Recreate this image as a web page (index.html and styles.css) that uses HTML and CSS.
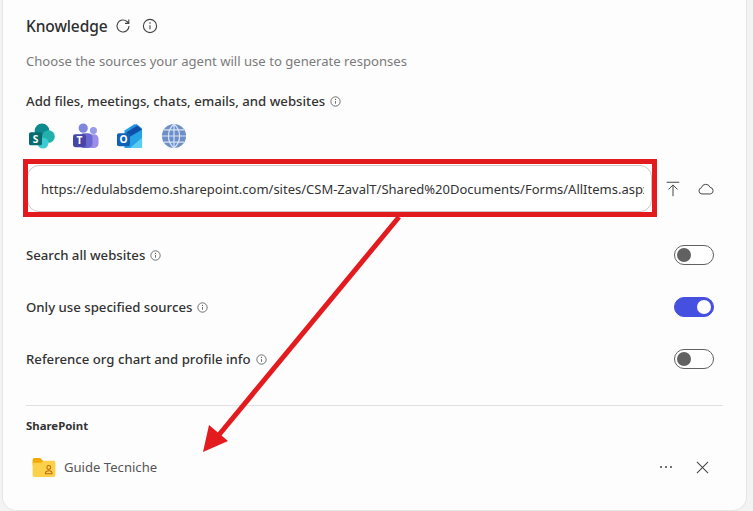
FILE: index.html
```html
<!DOCTYPE html>
<html lang="en">
<head>
    <meta charset="UTF-8" />
    <meta name="viewport" content="width=device-width, initial-scale=1.0" />
    <title>Knowledge</title>
    <link rel="stylesheet" href="styles.css">
</head>
<body>
    <div class="card">
        <div class="title-row">
            <h1>Knowledge</h1>
            <svg class="title-icon refresh" viewBox="0 0 16 16"><path d="M14 8a6 6 0 1 1-2-4.500L13.800 5.200M13.800 1.500v3.900H10"/></svg>
            <svg class="title-icon" viewBox="0 0 16 16"><circle cx="8" cy="8" r="6.600"/><path d="M8 7.300v4"/><circle class="dot" cx="8" cy="5" r=".8"/></svg>
        </div>
        <p class="desc">Choose the sources your agent will use to generate responses</p>
        <div class="label add-label">Add files, meetings, chats, emails, and websites
            <svg class="info" viewBox="0 0 16 16"><circle cx="8" cy="8" r="6.800"/><path d="M8 7.300v4"/><circle class="dot" cx="8" cy="4.900" r=".9"/></svg>
        </div>
        <div class="sources">
            <svg viewBox="0 0 28 28"><circle cx="14" cy="8.500" r="8" fill="#0e8a8f"/><circle cx="21" cy="14.500" r="6.800" fill="#22b0ab"/><circle cx="15" cy="21.500" r="6" fill="#3ccbd2"/><rect x="0" y="10" width="14" height="14" rx="2" fill="#066a70"/><text x="7" y="21" class="app-letter">S</text></svg>
            <svg viewBox="0 0 28 28"><circle cx="11" cy="5.500" r="5" fill="#7f86dc"/><circle cx="22" cy="8" r="3.800" fill="#959be6"/><rect x="15" y="12" width="12.500" height="15" rx="5" fill="#9a8ee8"/><rect x="7" y="11" width="14" height="16" rx="5" fill="#6a68d0"/><rect x="0" y="12" width="14" height="14" rx="2.500" fill="#4646a8"/><text x="7" y="23" class="app-letter">T</text></svg>
            <svg viewBox="0 0 28 28"><path d="M8 8 19 1l8 6v18a2 2 0 0 1-2 2H8z" fill="#27a2e4"/><path d="M14 5 21 1l6 5-10 7z" fill="#2a8ae0"/><path d="M10 10 22 3l5 4-15 9z" fill="#0f4fa8"/><path d="M14 27l13-11v9a2 2 0 0 1-2 2z" fill="#5ccdf2"/><rect x="0" y="11" width="14" height="14" rx="2" fill="#0f62b8"/><text x="7" y="22" class="app-letter">O</text></svg>
            <svg viewBox="0 0 28 28"><circle cx="14" cy="14" r="13" fill="#6c8fc9"/><path class="globe" d="M14 1v26M1 14h26M3 7.500h22M3 20.500h22M14 1c-8 7-8 19 0 26M14 1c8 7 8 19 0 26"/></svg>
        </div>
        <div class="url-row">
            <div class="url-input"><span class="url-text">https://edulabsdemo.sharepoint.com/sites/CSM-ZavalT/Shared%20Documents/Forms/AllItems.aspx</span></div>
            <svg class="url-icon" viewBox="0 0 20 20"><path d="M3 2.500h14M10 18V5.500M5 10.500l5-5 5 5"/></svg>
            <svg class="url-icon" viewBox="0 0 20 20"><path d="M5.500 15.500a3.500 3.500 0 0 1-.6-6.900 5 5 0 0 1 9.600-.4 3.700 3.700 0 0 1 .5 7.300z"/></svg>
        </div>
        <div class="setting">
            <div class="label">Search all websites
                <svg class="info" viewBox="0 0 16 16"><circle cx="8" cy="8" r="6.800"/><path d="M8 7.300v4"/><circle class="dot" cx="8" cy="4.900" r=".9"/></svg>
            </div>
            <div class="toggle"></div>
        </div>
        <div class="setting">
            <div class="label">Only use specified sources
                <svg class="info" viewBox="0 0 16 16"><circle cx="8" cy="8" r="6.800"/><path d="M8 7.300v4"/><circle class="dot" cx="8" cy="4.900" r=".9"/></svg>
            </div>
            <div class="toggle on"></div>
        </div>
        <div class="setting">
            <div class="label">Reference org chart and profile info
                <svg class="info" viewBox="0 0 16 16"><circle cx="8" cy="8" r="6.800"/><path d="M8 7.300v4"/><circle class="dot" cx="8" cy="4.900" r=".9"/></svg>
            </div>
            <div class="toggle"></div>
        </div>
        <hr class="divider">
        <div class="section-title">SharePoint</div>
        <div class="source-item">
            <svg class="folder" viewBox="0 0 24 20"><path d="M0 2a2 2 0 0 1 2-2h6l3 3v4H0z" fill="#f2a900"/><path d="M0 5h9l3-2h10a2 2 0 0 1 2 2v13a2 2 0 0 1-2 2H2a2 2 0 0 1-2-2z" fill="#fdd049"/><circle cx="17" cy="10" r="2" fill="none" stroke="#b8690b" stroke-width="1.100"/><path d="M13.500 16.500c0-2 1.500-3 3.500-3s3.500 1 3.500 3z" fill="none" stroke="#b8690b" stroke-width="1.100"/></svg>
            <span class="source-name">Guide Tecniche</span>
            <span class="more">
                <i></i><i></i><i></i>
            </span>
            <svg class="close" viewBox="0 0 14 14"><path d="M1 1l12 12M13 1L1 13"/></svg>
        </div>
    </div>

    <div class="red-box"></div>
    <svg class="arrow" viewBox="0 0 753 511"><path d="M399 217 218 436" stroke="#e31b1f" stroke-width="5" fill="none"/><path d="M203 452 209 425 228 441z" fill="#e31b1f"/></svg>
</body>
</html>
```

FILE: styles.css
```css
* {
    box-sizing: border-box;
}

body {
    font-family: "Noto Sans", "Open Sans", Arial, sans-serif;
    background-color: #f3f3f3;
    color: #2b2b2b;
    margin: 0;
    width: 753px;
    height: 511px;
    overflow: hidden;
}

.card {
    width: 745px;
    height: 511px;
    margin-left: 2px;
    padding: 15px 23px 0;
    background-color: #fdfdfd;
    border-radius: 0 0 14px 14px;
    border-right: 1px solid #e6e6e6;
    border-bottom: 1px solid #e6e6e6;
    border-left: 1px solid #e6e6e6;
}

.title-row {
    display: flex;
    align-items: center;
    height: 22px;
}

.title-row h1 {
    margin: 0;
    font-size: 15.500px;
    font-weight: 500;
    letter-spacing: -0.1px;
    color: #2e2e2e;
}

.title-icon {
    width: 16px;
    height: 16px;
    margin-left: 11px;
    fill: none;
    stroke: #444;
    stroke-width: 1.100;
}

.title-icon.refresh {
    margin-left: 8px;
}

.dot {
    fill: #444;
    stroke: none;
}

.desc {
    margin: 15px 0 0;
    font-size: 13.100px;
    line-height: 18px;
    color: #7b7b7b;
}

.label {
    display: flex;
    align-items: center;
    font-size: 13.200px;
    line-height: 18px;
    font-weight: 500;
    color: #333;
}

.add-label {
    margin-top: 22px;
}

.info {
    width: 11px;
    height: 11px;
    margin-left: 5px;
    fill: none;
    stroke: #555;
    stroke-width: 1.200;
}

.sources {
    display: flex;
    gap: 18px;
    margin-top: 13px;
    padding-left: 3px;
}

.sources svg {
    width: 26px;
    height: 26px;
}

.app-letter {
    font-size: 11px;
    font-weight: 700;
    fill: #fff;
    text-anchor: middle;
}

.globe {
    fill: none;
    stroke: #d8e2f2;
    stroke-width: 1.300;
}

.url-row {
    display: flex;
    align-items: center;
    margin-top: 16px;
}

.url-input {
    width: 625px;
    height: 47px;
    margin-left: 1px;
    padding: 0 7px 0 13px;
    display: flex;
    align-items: center;
    background-color: #fff;
    border: 1px solid #c9c9c9;
    border-radius: 12px;
}

.url-text {
    overflow: hidden;
    white-space: nowrap;
    font-size: 13px;
    color: #333;
}

.url-icon {
    width: 18px;
    height: 18px;
    margin-left: 12px;
    fill: none;
    stroke: #444;
    stroke-width: 1.100;
}

.url-icon + .url-icon {
    margin-left: 15px;
}

.setting {
    display: flex;
    align-items: center;
    justify-content: space-between;
    height: 20px;
    margin-top: 32px;
    padding-right: 9px;
}

.url-row + .setting {
    margin-top: 33px;
}

.toggle {
    position: relative;
    width: 40px;
    height: 20px;
    border: 1px solid #616161;
    border-radius: 10px;
    background-color: #fff;
}

.toggle::after {
    content: "";
    position: absolute;
    top: 2px;
    left: 2px;
    width: 14px;
    height: 14px;
    border-radius: 50%;
    background-color: #616161;
}

.toggle.on {
    border-color: #4650e0;
    background-color: #4650e0;
}

.toggle.on::after {
    left: auto;
    right: 2px;
    background-color: #fff;
}

.divider {
    margin: 36px 0 0;
    border: 0;
    border-top: 1px solid #e0e0e0;
}

.section-title {
    margin-top: 12px;
    font-size: 11.400px;
    line-height: 16px;
    font-weight: 700;
    color: #333;
}

.source-item {
    display: flex;
    align-items: center;
    height: 20px;
    margin-top: 23px;
    padding-left: 6px;
}

.folder {
    width: 24px;
    height: 19px;
}

.source-name {
    margin-left: 8px;
    font-size: 13.100px;
    color: #555;
}

.more {
    display: flex;
    gap: 2.500px;
    margin-left: auto;
}

.more i {
    width: 2.500px;
    height: 2.500px;
    border-radius: 50%;
    background-color: #444;
}

.close {
    width: 13px;
    height: 13px;
    margin: 0 14px 0 24px;
    fill: none;
    stroke: #444;
    stroke-width: 1.100;
}

/* annotations drawn on top of the screenshot */
.red-box {
    position: absolute;
    left: 23px;
    top: 159px;
    width: 634px;
    height: 58px;
    border: 5px solid #e31b1f;
}

.arrow {
    position: absolute;
    left: 0;
    top: 0;
    width: 753px;
    height: 511px;
    pointer-events: none;
}
```
